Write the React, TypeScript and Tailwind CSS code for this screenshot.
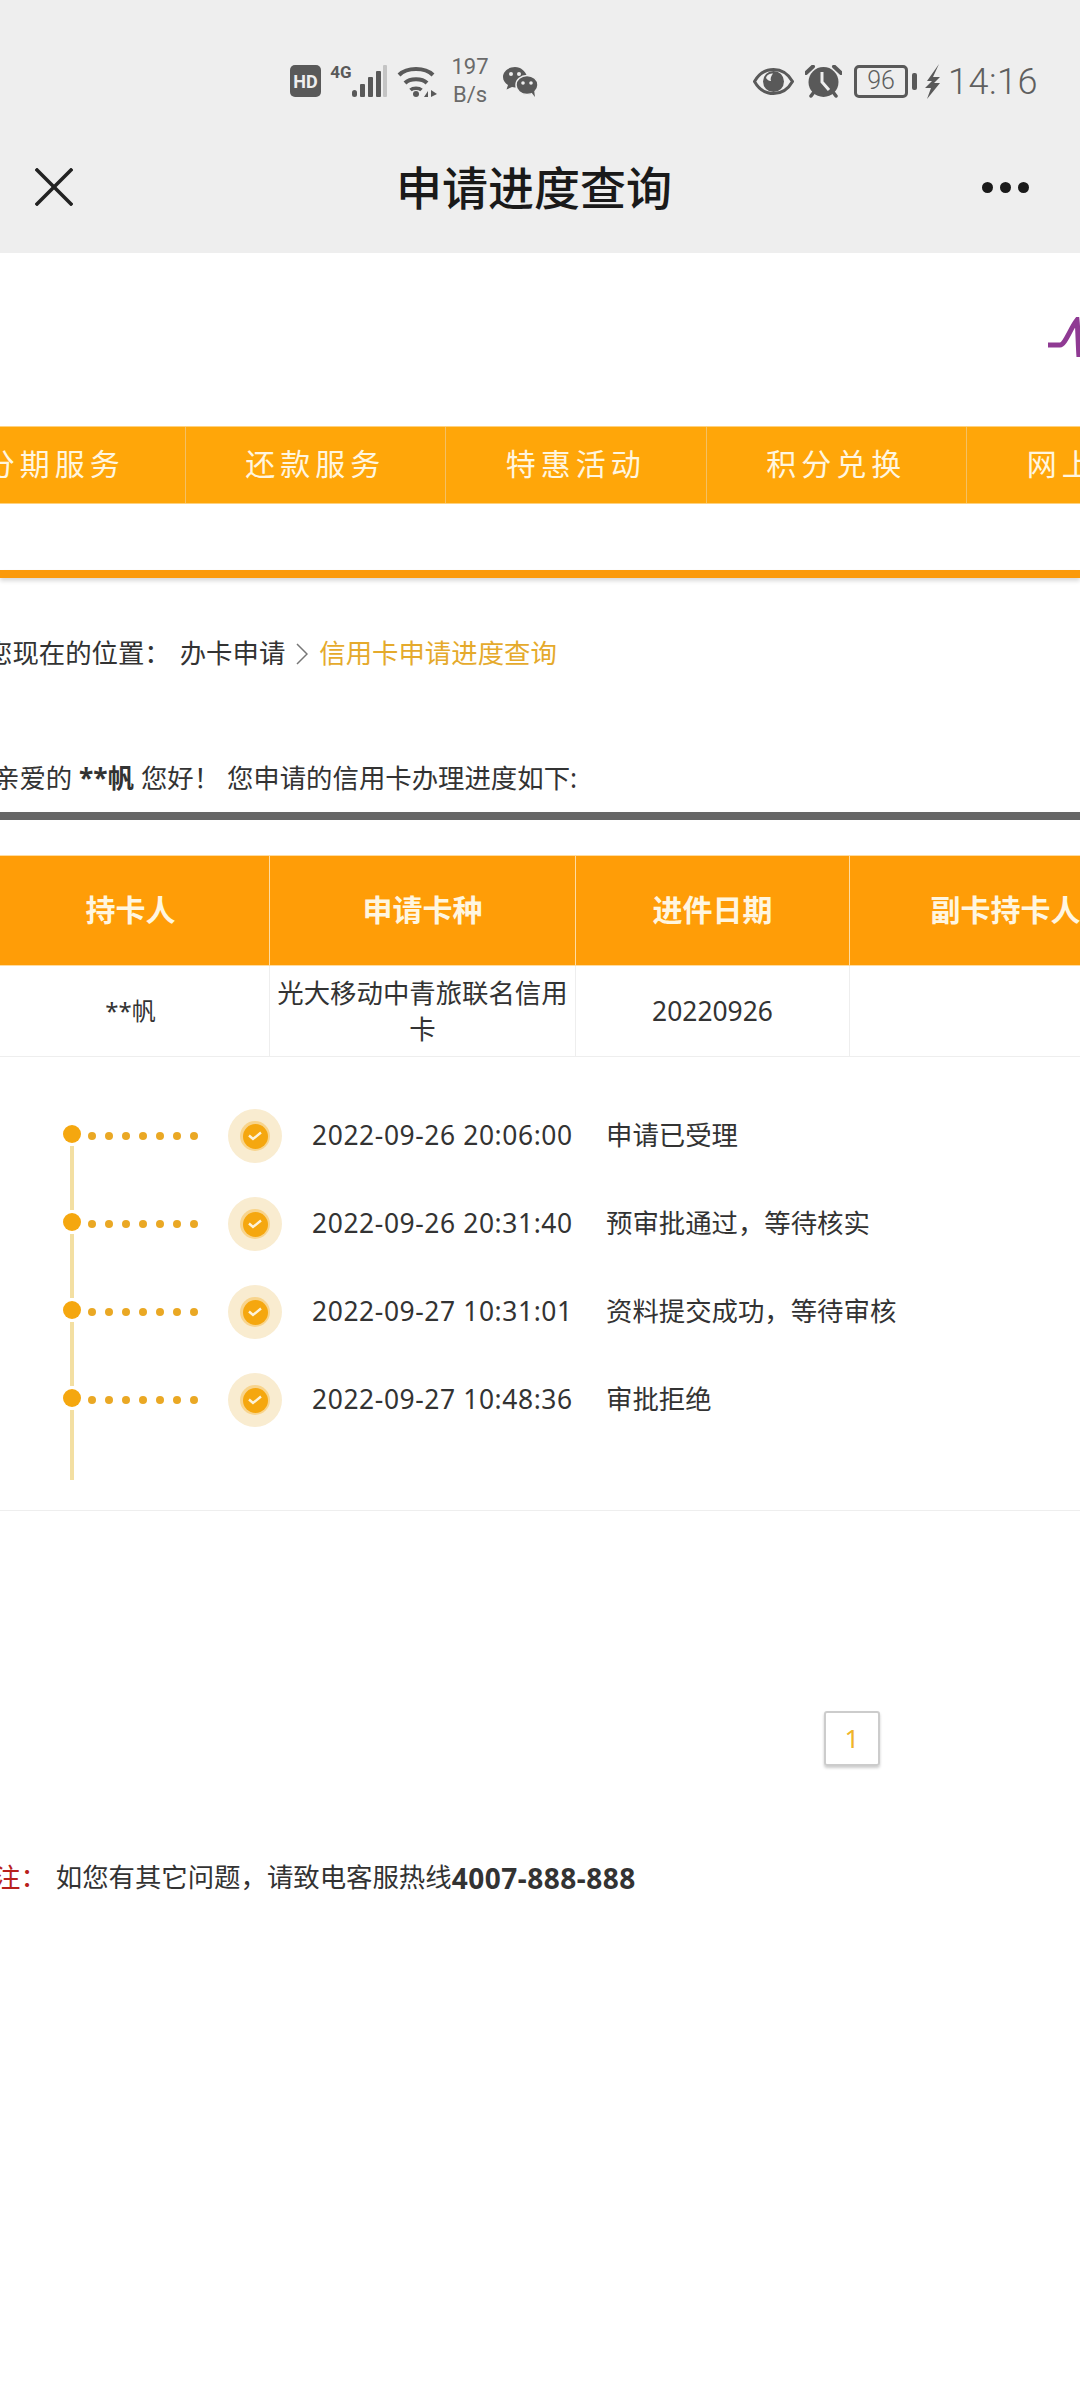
const NAV_ITEMS = ["分期服务", "还款服务", "特惠活动", "积分兑换", "网上商城"];

const STEPS = [
  { time: "2022-09-26 20:06:00", label: "申请已受理" },
  { time: "2022-09-26 20:31:40", label: "预审批通过，等待核实" },
  { time: "2022-09-27 10:31:01", label: "资料提交成功，等待审核" },
  { time: "2022-09-27 10:48:36", label: "审批拒绝" },
];

const SignalIcon = () => (
  <svg width="36" height="32" viewBox="0 0 36 32">
    <rect x="1" y="25" width="5" height="7" rx="2.5" fill="#595959" />
    <rect x="9" y="19" width="5" height="13" rx="1" fill="#595959" />
    <rect x="17" y="12" width="5" height="20" rx="1" fill="#595959" />
    <rect x="25" y="6" width="5" height="26" rx="1" fill="#595959" />
    <rect x="32" y="0" width="4" height="32" rx="1" fill="#c4c4c4" />
  </svg>
);

const WifiIcon = () => (
  <svg width="42" height="33" viewBox="0 0 42 33" fill="none" stroke="#595959" strokeWidth="4">
    <path d="M2 10C10 2 28 2 36 10" />
    <path d="M8 18C13 13 25 13 30 18" />
    <path d="M13.5 25C16 22.5 22 22.5 24.5 25" strokeWidth="3.5" />
    <circle cx="19" cy="29" r="3" fill="#595959" stroke="none" />
    <path d="M27 32L31 26V32ZM34 25L34 32L40 29Z" fill="#595959" stroke="none" />
  </svg>
);

const WechatIcon = () => (
  <svg width="35" height="31" viewBox="0 0 35 31">
    <path d="M12 1C5.5 1 0 5.5 0 11C0 14.5 2 17 5 19L3.5 23.5L9 21C10 21.3 11 21.4 12 21.4C17 21.4 24 16 24 10C22 5 18 1 12 1Z" fill="#595959" />
    <circle cx="8" cy="8" r="2" fill="#eeeeee" />
    <circle cx="16" cy="8" r="2" fill="#eeeeee" />
    <ellipse cx="24" cy="19" rx="11" ry="9.5" fill="#595959" stroke="#eeeeee" strokeWidth="1.5" />
    <path d="M28 26L32 31L31 24Z" fill="#595959" />
    <circle cx="20" cy="17" r="1.8" fill="#eeeeee" />
    <circle cx="28" cy="17" r="1.8" fill="#eeeeee" />
  </svg>
);

const EyeIcon = () => (
  <svg width="41" height="27" viewBox="0 0 41 27">
    <path d="M1.5 13.5C6 5.5 13 1.5 20.5 1.5C28 1.5 35 5.5 39.5 13.5C35 21.5 28 25.5 20.5 25.5C13 25.5 6 21.5 1.5 13.5Z" fill="none" stroke="#595959" strokeWidth="3" />
    <circle cx="20.5" cy="13.5" r="10.5" fill="#595959" />
    <path d="M13 10C14 6.5 17 5.5 20 5.5C18 8 17 11 18 13C16.5 13.5 14.5 12 13 10Z" fill="#eeeeee" />
  </svg>
);

const AlarmIcon = () => (
  <svg width="37" height="33" viewBox="0 0 37 33">
    <path d="M1 8L8 1.5" stroke="#595959" strokeWidth="4" strokeLinecap="round" />
    <path d="M36 8L29 1.5" stroke="#595959" strokeWidth="4" strokeLinecap="round" />
    <path d="M6 31L9 27M31 31L28 27" stroke="#595959" strokeWidth="3.5" strokeLinecap="round" />
    <circle cx="18.5" cy="17" r="15" fill="#595959" />
    <path d="M17 7V17L24 25" fill="none" stroke="#eeeeee" strokeWidth="3" />
  </svg>
);

const BoltIcon = () => (
  <svg width="16" height="35" viewBox="0 0 16 35">
    <path d="M14 0L2 17H7L0 24H6L2 35L15 19H9L15 13H8Z" fill="#595959" />
  </svg>
);

const CloseIcon = () => (
  <svg width="38" height="38" viewBox="0 0 38 38" stroke="#222222" strokeWidth="3.5" strokeLinecap="square">
    <path d="M2 2L36 36" />
    <path d="M36 2L2 36" />
  </svg>
);

const LogoMark = () => (
  <svg width="32" height="40" viewBox="0 0 32 40" fill="none" strokeWidth="5">
    <path d="M0 28H12C17 28 22 12 29 3C30 12 30 26 31 40" stroke="#8f3a93" />
  </svg>
);

const CheckBadge = () => (
  <div className="flex h-[54px] w-[54px] items-center justify-center rounded-full bg-[#f9ecd0]">
    <div className="flex h-[30px] w-[30px] items-center justify-center rounded-full bg-[#f8d48c]">
      <div className="flex h-[25px] w-[25px] items-center justify-center rounded-full bg-[#f5a70f]">
        <svg width="14" height="10" viewBox="0 0 14 10" fill="none" stroke="#fdf3da" strokeWidth="2.4">
          <path d="M1 4.5L5 8L13 1.5" />
        </svg>
      </div>
    </div>
  </div>
);

export default function App() {
  return (
    <div className="h-[2400px] w-[1080px] overflow-hidden bg-white font-['Noto_Sans','Noto_Sans_CJK_SC',sans-serif] text-[26.4px] text-[#333333]">
      {/* Status bar and title */}
      <div className="h-[253px] bg-[#eeeeee] pt-[57px]">
        <div className="flex h-[48px] items-center pl-[290px] text-[#5f5f5f]">
          <div className="flex h-[32px] w-[31px] items-center justify-center rounded-[5px] bg-[#595959] font-['Roboto',sans-serif] text-[18px] font-bold text-[#eeeeee]">
            HD
          </div>
          <div className="ml-[10px] flex h-[32px] w-[20px] items-start justify-center font-['Roboto',sans-serif] text-[17px] leading-[15px] font-bold text-[#595959]">
            4G
          </div>
          <SignalIcon />
          <div className="ml-[10px]">
            <WifiIcon />
          </div>
          <div className="ml-[10px] flex w-[42px] flex-col items-center font-['Roboto',sans-serif] text-[22px] leading-[28px] text-[#6a6a6a]">
            <span>197</span>
            <span>B/s</span>
          </div>
          <div className="ml-[12px]">
            <WechatIcon />
          </div>
          <div className="ml-[215px]">
            <EyeIcon />
          </div>
          <div className="ml-[11px]">
            <AlarmIcon />
          </div>
          <div className="ml-[12px] flex h-[33px] w-[54px] items-center justify-center rounded-[5px] border-[3px] border-[#595959] font-['Roboto',sans-serif] text-[25px] font-light">
            96
          </div>
          <div className="ml-[4px] h-[17px] w-[5px] rounded-[2px] bg-[#595959]"></div>
          <div className="ml-[8px]">
            <BoltIcon />
          </div>
          <div className="ml-[7px] pt-[2px] font-['Roboto',sans-serif] text-[36px] font-light tracking-[0.5px]">14:16</div>
        </div>
        <div className="mt-[54px] flex h-[56px] items-center justify-between pr-[51px] pl-[35px]">
          <CloseIcon />
          <div className="ml-[13px] text-[46px] leading-[56px] font-medium text-[#1a1a1a]">申请进度查询</div>
          <div className="flex gap-[7px]">
            <div className="h-[11px] w-[11px] rounded-full bg-[#1a1a1a]"></div>
            <div className="h-[11px] w-[11px] rounded-full bg-[#1a1a1a]"></div>
            <div className="h-[11px] w-[11px] rounded-full bg-[#1a1a1a]"></div>
          </div>
        </div>
      </div>

      {/* Logo strip */}
      <div className="flex h-[173px] justify-end pt-[64px]">
        <LogoMark />
      </div>

      {/* Orange menu, wider than the viewport */}
      <div className="-ml-[75px] flex h-[78px] w-[1400px] border-y border-[#ffd27f] bg-[#ffa609]">
        {NAV_ITEMS.map((item) => (
          <div
            key={item}
            className="flex w-[260.5px] shrink-0 items-center justify-center border-r border-[#f4c063] pb-[4px] text-[30px] tracking-[5px] text-[#fff6e0]"
          >
            {item}
          </div>
        ))}
      </div>
      <div className="mt-[66px] h-[8px] bg-[#fb9a0c] shadow-[0_3px_4px_rgba(0,0,0,0.15)]"></div>

      {/* Breadcrumb */}
      <div className="mt-[56px] -ml-[14px] flex h-[40px] items-center whitespace-nowrap">
        <span>您现在的位置：</span>
        <span className="ml-[9px]">办卡申请</span>
        <svg width="12" height="22" viewBox="0 0 12 22" fill="none" stroke="#777777" strokeWidth="1.5" className="ml-[11px]">
          <path d="M1 1L11 11L1 21" />
        </svg>
        <span className="ml-[11px] text-[#e5aa2c]">信用卡申请进度查询</span>
      </div>

      {/* Greeting */}
      <div className="mt-[85px] -ml-[7px] flex h-[40px] items-center whitespace-pre">
        <span>亲爱的 </span>
        <span className="font-bold">**帆</span>
        <span> 您好！ 您申请的信用卡办理进度如下:</span>
      </div>
      <div className="mt-[13px] h-[8px] bg-[#666666]"></div>

      {/* Application table */}
      <div className="mt-[35px] -ml-[8px] grid w-[1170px] grid-cols-[278px_306px_274px_312px]">
        {["持卡人", "申请卡种", "进件日期", "副卡持卡人"].map((title) => (
          <div
            key={title}
            className="flex h-[111px] items-center justify-center border-y border-r border-[#ffdca0] bg-[#ff9d07] pb-[2px] text-[30px] font-bold text-[#fff6e0]"
          >
            {title}
          </div>
        ))}
        <div className="flex h-[91px] items-center justify-center border-r border-b border-[#eeeeee] text-[24px]">**帆</div>
        <div className="flex h-[91px] items-center justify-center border-r border-b border-[#eeeeee] px-[4px] text-center leading-[36px]">
          光大移动中青旅联名信用卡
        </div>
        <div className="flex h-[91px] items-center justify-center border-r border-b border-[#eeeeee] pt-[2px]">20220926</div>
        <div className="h-[91px] border-r border-b border-[#eeeeee]"></div>
      </div>

      {/* Progress timeline */}
      <div className="flex h-[454px] border-b border-[#eeeeee]">
        <div className="mt-[68px] ml-[63px] flex w-[18px] flex-col items-center">
          {STEPS.map((step, index) => (
            <div key={step.time} className="flex flex-col items-center">
              <div className="h-[18px] w-[18px] rounded-full bg-[#f5a70f]"></div>
              <div className={`mt-[3px] w-[4px] bg-[#f3dfa2] ${index === 3 ? "h-[70px]" : "h-[64px]"}`}></div>
              {index < 3 && <div className="h-[3px]"></div>}
            </div>
          ))}
        </div>
        <div className="mt-[35px] ml-[7px] flex flex-col">
          {STEPS.map((step) => (
            <div key={step.time} className="flex h-[88px] items-center whitespace-nowrap">
              <div className="flex w-[110px] gap-[9px]">
                {[0, 1, 2, 3, 4, 5, 6].map((dot) => (
                  <div key={dot} className="h-[8px] w-[8px] rounded-full bg-[#eaa824]"></div>
                ))}
              </div>
              <div className="ml-[30px]">
                <CheckBadge />
              </div>
              <div className="ml-[30px] w-[294px] pb-[3px] leading-[36px] tracking-[0.6px]">{step.time}</div>
              <div className="pb-[3px] leading-[36px]">{step.label}</div>
            </div>
          ))}
        </div>
      </div>

      {/* Pagination */}
      <div className="mt-[200px] ml-[824px] flex h-[55px] w-[56px] items-center justify-center rounded-[3px] border-2 border-[#cccccc] text-[26px] text-[#f0b429] shadow-[0_2px_3px_rgba(0,0,0,0.2)]">
        1
      </div>

      {/* Footer note */}
      <div className="mt-[92px] -ml-[6px] flex h-[40px] items-center whitespace-nowrap">
        <span className="text-[#b8201b]">注：</span>
        <span className="ml-[9px]">如您有其它问题，请致电客服热线</span>
        <span className="text-[28px] font-bold tracking-[0.5px]">4007-888-888</span>
      </div>
    </div>
  );
}
